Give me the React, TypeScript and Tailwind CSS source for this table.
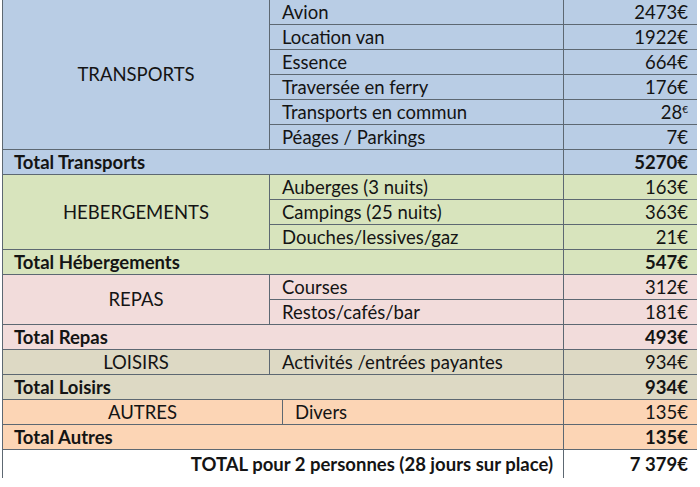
type Item = { label: string; amount: React.ReactNode };

const line = "border-[#5d6872]";

function Section({
  name,
  items,
  bg,
  catW,
}: {
  name: string;
  items: Item[];
  bg: string;
  catW: string;
}) {
  return (
    <div className={`flex ${bg} border-b ${line}`}>
      <div className={`${catW} flex items-center justify-center border-r ${line}`}>{name}</div>
      <div className="flex-1 flex flex-col">
        {items.map((it, i) => (
          <div
            key={i}
            className={`flex ${i < items.length - 1 ? `h-[25px] border-b ${line}` : "h-[24px]"}`}
          >
            <div className="flex-1 flex items-center pl-3">{it.label}</div>
            <div className={`w-[134px] flex items-center justify-end pr-[9px] border-l ${line}`}>
              {it.amount}
            </div>
          </div>
        ))}
      </div>
    </div>
  );
}

function Total({ label, amount, bg }: { label: string; amount: string; bg: string }) {
  return (
    <div className={`flex h-[25px] font-bold ${bg} border-b ${line}`}>
      <div className="flex-1 flex items-center pl-[11px]">{label}</div>
      <div className={`w-[134px] flex items-center justify-end pr-[9px] border-l ${line}`}>{amount}</div>
    </div>
  );
}

export default function App() {
  return (
    <div className="w-[700px] h-[487px] bg-white font-['Lato',sans-serif] text-[18.5px] leading-none text-[#141414]">
      <div className={`ml-[2px] w-[695px] border-l ${line}`}>
        <Section
          name="TRANSPORTS"
          bg="bg-[#b9cde5]"
          catW="w-[267px]"
          items={[
            { label: "Avion", amount: "2473€" },
            { label: "Location van", amount: "1922€" },
            { label: "Essence", amount: "664€" },
            { label: "Traversée en ferry", amount: "176€" },
            {
              label: "Transports en commun",
              amount: (
                <span>
                  28<sup className="text-[10px] -top-[6px]">€</sup>
                </span>
              ),
            },
            { label: "Péages / Parkings", amount: "7€" },
          ]}
        />
        <Total label="Total Transports" amount="5270€" bg="bg-[#b9cde5]" />
        <Section
          name="HEBERGEMENTS"
          bg="bg-[#d8e4bd]"
          catW="w-[267px]"
          items={[
            { label: "Auberges (3 nuits)", amount: "163€" },
            { label: "Campings (25 nuits)", amount: "363€" },
            { label: "Douches/lessives/gaz", amount: "21€" },
          ]}
        />
        <Total label="Total Hébergements" amount="547€" bg="bg-[#d8e4bd]" />
        <Section
          name="REPAS"
          bg="bg-[#f2dcdb]"
          catW="w-[267px]"
          items={[
            { label: "Courses", amount: "312€" },
            { label: "Restos/cafés/bar", amount: "181€" },
          ]}
        />
        <Total label="Total Repas" amount="493€" bg="bg-[#f2dcdb]" />
        <Section
          name="LOISIRS"
          bg="bg-[#ddd9c4]"
          catW="w-[267px]"
          items={[{ label: "Activités /entrées payantes", amount: "934€" }]}
        />
        <Total label="Total Loisirs" amount="934€" bg="bg-[#ddd9c4]" />
        <Section
          name="AUTRES"
          bg="bg-[#fcd5b5]"
          catW="w-[280px]"
          items={[{ label: "Divers", amount: "135€" }]}
        />
        <Total label="Total Autres" amount="135€" bg="bg-[#fcd5b5]" />
        <div className="flex h-[28px] font-bold">
          <div className="flex-1 flex items-center justify-end pr-[10px]">
            TOTAL pour 2 personnes (28 jours sur place)
          </div>
          <div className={`w-[134px] flex items-center justify-end pr-[9px] border-l ${line}`}>7 379€</div>
        </div>
      </div>
    </div>
  );
}
